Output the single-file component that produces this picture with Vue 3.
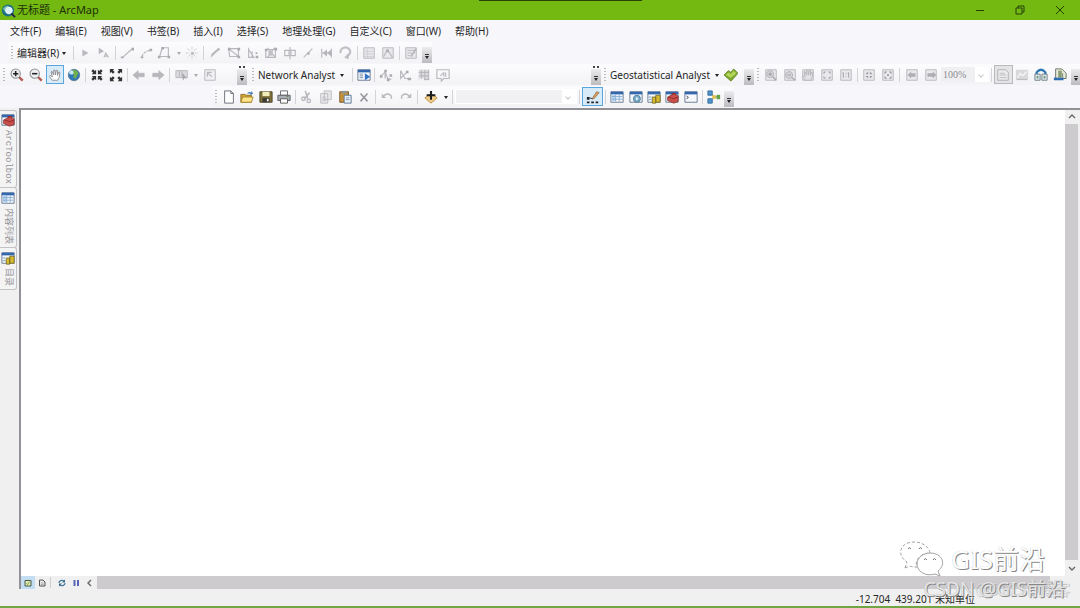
<script setup>
const menus = ['文件(F)', '编辑(E)', '视图(V)', '书签(B)', '插入(I)', '选择(S)', '地理处理(G)', '自定义(C)', '窗口(W)', '帮助(H)']

const page = '<path d="M2 2h12v12H2z" fill="#e9e9ec" stroke="#b4b4b9"/>'
const win = '<path d="M1 2h14v12H1z" fill="#f4f8fc" stroke="#61748c"/><path d="M1 2h14v3H1z" fill="#3468ae"/>'
const g = 'fill="none" stroke="#b8b8bd" stroke-width="1.3"'
const lens = '<path d="M10 10l4.500 4.500" stroke="#b05a50" stroke-width="2.800"/><circle cx="6.500" cy="6.500" r="5.300" fill="#eef0f2" stroke="#8a8d92" stroke-width="1.200"/>'
const inward = '<path d="M2 7h5V2L5.500 3.500 3.500 1.500l-2 2 2 2zM14 7H9V2l1.500 1.500 2-2 2 2-2 2zM2 9h5v5l-1.500-1.500-2 2-2-2 2-2zM14 9H9v5l1.500-1.500 2 2 2-2-2-2z" fill="#333"/>'
const outward = '<path d="M1 1h5L4.500 2.500l2 2-2 2-2-2L1 6zM15 1h-5l1.500 1.500-2 2 2 2 2-2L15 6zM1 15h5l-1.500-1.500 2-2-2-2-2 2L1 10zM15 15h-5l1.500-1.500-2-2 2-2 2 2L15 10z" fill="#333"/>'
const hand = 'M5 14L1.500 9.500l1-1L5 10 3.500 4.500l1-.8L6.500 8V2.500h1.500L8.500 8l1-5.500 1.400.3L10.800 8.500l1.700-4 1.200.5-1 6L11 14z'

const icons = {
  play: '<path d="M5 4l7 4-7 4z" fill="#b9b9be"/>',
  playA: '<path d="M2 2l6 4-6 3z" fill="#b5b5ba"/><path d="M8 13l2-5 3 5M9 11.500h3" ' + g + '/>',
  line: `<path d="M3 13L13 4" ${g}/><path d="M1 12h3v2H1zM13 2h3v3h-3z" fill="#aaaab0"/>`,
  curve: `<path d="M3 13q2-7 10-8" ${g} stroke-dasharray="4 1"/><path d="M2 12h3v2H2zM12 3h3v3h-3z" fill="#aaaab0"/>`,
  poly: `<path d="M2 12h11V2H6L3 12" ${g}/><path d="M1 11h3v3H1zM12 11h3v3h-3zM5 1h3v3H5z" fill="#aaaab0"/>`,
  burst: '<path d="M8 1v4M8 11v4M1 8h4M11 8h4M3 3l3 3M10 10l3 3M13 3l-3 3M6 10l-3 3" stroke="#c2c2c7" stroke-dasharray="2 1"/><path d="M7 7h3v3H7z" fill="#b5b5ba"/>',
  pencil: '<path d="M3 13l1-4 8-7 2 2-8 7z" fill="#b5b5ba"/><path d="M4 13l8-8" stroke="#ededf0"/>',
  verts: `<path d="M2 3h11v9H3zM2 3l11 9" ${g}/><path d="M1 2h3v3H1zM12 11h3v3h-3zM12 2h3v3h-3z" fill="#aaaab0"/>`,
  tri: `<path d="M3 2v11h6L3 4M7 6v7" ${g}/><path d="M11 7h2v2h-2zM11 11h3v3h-3z" fill="#aaaab0"/>`,
  cut: `<path d="M2 4h11v9H2zM4 2l9 11M12 2L4 13" ${g}/><path d="M5 5h5v6H5z" fill="#c0c0c5"/><path d="M1 3h3v3H1zM12 2h3v3h-3z" fill="#aaaab0"/>`,
  split: `<path d="M2 5h12v6H2zM8 1v14" ${g}/><path d="M6 6h4v4H6z" fill="#c6c6ca"/>`,
  slash: `<path d="M3 13L13 3" ${g}/><path d="M7 7h3v3H7z" fill="#b5b5ba"/>`,
  merge: `<path d="M2 3v10M13 3v10M3 8h10" ${g}/><path d="M3 8l5-4v8zM13 4v8L8 8z" fill="#b5b5ba"/>`,
  rotate: '<path d="M2 8a5.500 5 0 1 1 8 3" fill="none" stroke="#c2c2c6" stroke-width="2.600"/><path d="M11 8v7l-5-2z" fill="#bcbcc0"/>',
  table: page + '<path d="M3 6h10M3 9h10M3 12h10M6 3v11" stroke="#cdcdd2"/>',
  sketch: page + `<path d="M3 12l4-7 3 3 3 5" ${g}/><path d="M6 4h3v3H6z" fill="#aaaab0"/>`,
  form: page + '<path d="M4 5h8M4 8h5M4 11h3" stroke="#b4b4b9"/><path d="M8 12l6-9" stroke="#b4b4b9" stroke-width="2"/>',
  zoomIn: lens + '<path d="M3.500 6.500h6M6.500 3.500v6" stroke="#222" stroke-width="1.800"/>',
  zoomOut: lens + '<path d="M3.500 6.500h6" stroke="#222" stroke-width="1.800"/>',
  pan: `<path d="${hand}" fill="#fff" stroke="#88888c"/>`,
  globe: '<circle cx="8" cy="8" r="6.500" fill="#2e77b8" stroke="#5d7d93"/><path d="M7 2q5 0 6 4l-3 6-3-1 1-3-3-2z" fill="#6fae4c"/><circle cx="5" cy="5" r="2.500" fill="#c9e6f7"/>',
  inward,
  outward,
  back: '<path d="M1 8l6-5v3h7v4H7v3z" fill="#b8b8bc" stroke="#adadb2" stroke-width=".6"/>',
  fwd: '<path d="M15 8L9 3v3H2v4h7v3z" fill="#b8b8bc" stroke="#adadb2" stroke-width=".6"/>',
  select: '<path d="M1 3h13v8H1z" fill="#dcdce0" stroke="#b4b4b9"/><path d="M5 3v8M8 3v8" stroke="#b4b4b9"/><path d="M8 5l6 7-3-.5-2 3z" fill="#a8a8ae"/>',
  clear: '<path d="M2 2h12v12H2z" fill="#f0f0f3" stroke="#b4b4b9"/>' + `<path d="M5 5l5 5M5 10V5h5" ${g}/>`,
  netWin: win + '<path d="M3 7h4M3 9h4M3 11h4" stroke="#79889a"/><path d="M9 6l6 4-6 4z" fill="#2f72c8"/>',
  net1: `<path d="M2 9l5-4 3 7 4 1M7 5v7" ${g}/><path d="M6 2h3v3H6zM1 8h3v3H1zM12 7h3v3h-3zM9 12h3v3H9z" fill="#aaaab0"/>`,
  net2: `<path d="M3 3v9l7-7M3 3l5 9h5" ${g}/><path d="M9 3h3v3H9zM11 11h4v3h-4z" fill="#aaaab0"/>`,
  netGrid: '<path d="M2 2h12v12H2z" fill="#dcdce0"/><path d="M2 5h12M2 9h12M2 13h12M5 2v12M9 2v12M13 2v12" stroke="#b0b0b5"/><path d="M2 12h6v3H2z" fill="#f2f2f4"/>',
  netInfo: `<path d="M1 2h14v10H9l-3 3v-3H1z" ${g}/><path d="M5 9l4-4M9 5v5M11 5v5" ${g}/>`,
  gem: '<path d="M0 8l5-5 3 2 3-4 5 5-8 9z" fill="#7daa2e" stroke="#67852e"/><path d="M2 8l3-3 3 2 3-4 3 3-6 5z" fill="#b5d558"/>',
  pZoomIn: page + '<circle cx="7" cy="7" r="4" fill="#d4d4d8" stroke="#b0b0b5"/><path d="M5 7h4M7 5v4M10 10l4 4" stroke="#a4a4a9" stroke-width="1.400"/>',
  pZoomOut: page + '<circle cx="7" cy="8" r="4" fill="#d4d4d8" stroke="#b0b0b5"/><path d="M5 8h4M10 11l4 3" stroke="#a4a4a9" stroke-width="1.400"/>',
  pHand: page + `<path d="${hand}" fill="#e2e2e5" stroke="#b4b4b9"/>`,
  pFull: page + '<path d="M4 4h3L4 7zM9 4h3v3zM4 9l3 3H4zM12 9v3H9z" fill="#a2a2a7"/>',
  pOne: page + '<path d="M5 5v6M11 5v6M4 6l1-1M10 6l1-1M8 6v1M8 9v1" stroke="#a8a8ad" stroke-width="1.200"/>',
  pIn: page + '<path d="M4 7h3V4zM9 4v3h3zM4 9h3v3zM9 9h3l-3 3z" fill="#96969b"/>',
  pOut: page + '<path d="M4 4h3L4 7zM9 4h3v3zM4 9l3 3H4zM12 9v3H9zM7 7h2v2H7z" fill="#96969b"/>',
  pBack: page + '<path d="M3 8l4-4v2h5v4H7v2z" fill="#adadb2"/>',
  pFwd: page + '<path d="M14 8l-4-4v2H4v4h6v2z" fill="#adadb2"/>',
  draft: '<path d="M2 2h9l3 3v9H2z" fill="#ececee" stroke="#aaaaae"/><path d="M4 6h6M4 8h8M4 11h8" stroke="#b9b9bd"/>',
  chart: '<path d="M1 2h14v12H1z" fill="#d9d9dc"/><path d="M3 11l3-5 3 3 4-5" fill="none" stroke="#f6f6f8" stroke-width="1.500"/><path d="M2 13h12" stroke="#b4b4b9"/>',
  swap: '<path d="M3 7V5q5-6 10 0v2" fill="none" stroke="#2d77b5" stroke-width="2.600"/><path d="M1 7h6v7H1zM9 7h6v7H9z" fill="#dfe6e8" stroke="#6d7b80"/><path d="M3 9h2v3H3zM11 9h2v3h-2z" fill="#6d9a88"/>',
  ddp: '<path d="M3 1h7l5 5v6H3z" fill="#e8ead9" stroke="#5e6a5a"/><path d="M6 3h4v8H6z" fill="#8a9a72"/><path d="M11 6v5" stroke="#6d7a68"/><path d="M1 11h11v3H1z" fill="#2e6db2"/>',
  newDoc: '<path d="M3 1h7l3 3v11H3z" fill="#fff" stroke="#62666f"/><path d="M10 1v3h3" fill="none" stroke="#62666f"/>',
  open: '<path d="M1 5h5l1 1h6v8H1z" fill="#d2a338" stroke="#8a6a1c"/><path d="M3 8h12l-2 6H1z" fill="#ffe58a" stroke="#a5842c"/><path d="M8 4q2-3 5-1V1l2 3-3 2V4" fill="#3474ba"/>',
  save: '<path d="M1 2h14v12H1z" fill="#7d7038" stroke="#4a4428"/><path d="M4 2h8v5H4z" fill="#f2eebc"/><path d="M4 9h8v5H4z" fill="#3b3b33"/><path d="M9 10h2v3H9z" fill="#eee"/>',
  print: '<path d="M4 1h8v5H4z" fill="#fff" stroke="#60646a"/><path d="M1 6h14v6H1z" fill="#aab0b5" stroke="#53575d"/><path d="M4 10h8v5H4z" fill="#fafafa" stroke="#555"/><path d="M11 7.500h2" stroke="#4d7a3c"/>',
  scissors: '<path d="M6 1l3 9M11 3L5 10" fill="none" stroke="#b8b8bd" stroke-width="1.800"/><circle cx="4" cy="10" r="2" fill="none" stroke="#b8b8bd" stroke-width="1.500"/><circle cx="10" cy="12.500" r="2" fill="none" stroke="#b8b8bd" stroke-width="1.500"/>',
  copy: '<path d="M6 1h8v10H6zM2 4h8v11H2z" fill="#e8e8eb" stroke="#b9b9be"/><path d="M4 8h4M4 10h4M4 12h4" stroke="#c0c0c5"/>',
  paste: '<path d="M2 2h10v12H2z" fill="#c6923c" stroke="#765422"/><path d="M4 1h6v3H4z" fill="#8f9297"/><path d="M7 6h8v9H7z" fill="#e8f0f8" stroke="#56728f"/><path d="M9 9h4M9 11h4" stroke="#7b97b3"/>',
  remove: '<path d="M4 4l8 9M12 4l-8 9" stroke="#98989d" stroke-width="1.800"/>',
  undo: '<path d="M4 7q5-5 9 0v3" fill="none" stroke="#b8b8bd" stroke-width="1.600"/><path d="M2 4v5h5z" fill="#b8b8bd"/>',
  redo: '<path d="M12 7q-5-5-9 0v3" fill="none" stroke="#b8b8bd" stroke-width="1.600"/><path d="M14 4v5H9z" fill="#b8b8bd"/>',
  addData: '<path d="M8 4l7 5-7 6-7-6z" fill="#f2cf8c" stroke="#b98a34"/><path d="M8 1v10M3 6h10" stroke="#1d1d1d" stroke-width="2.400"/>',
  editorBar: '<path d="M1 8h3v3H1zM1 13h3v2H1zM6 13h3v2H6zM11 13h3v2h-3z" fill="#222"/><path d="M4 9l4 1" stroke="#222"/><path d="M7 10l5-8 3 1-6 7z" fill="#e0a060" stroke="#7d5530" stroke-width=".7"/>',
  toc: win + '<path d="M2 5h4v8H2z" fill="#b7d5f0"/><path d="M2 7.500h12M2 10.500h12M6.500 5v8M10.500 5v8" stroke="#83a9cf"/>',
  catalogWin: win + '<circle cx="9" cy="10" r="4" fill="#7aaecf" stroke="#4b7793"/><path d="M8 8l3 2-3 2z" fill="#e9f3f0"/>',
  catalog: win + '<path d="M6 8h4v7H6zM10 6h5v8h-5z" fill="#dabb30" stroke="#77702a"/><path d="M2 8h3M2 11h3" stroke="#7694b0"/>',
  toolbox: win + '<path d="M3 8l8-4 4 3v6l-5 2-7-3z" fill="#c9504a" stroke="#8e3f3b"/><path d="M4 8l6 2 5-2M8 6V4h4v2" fill="none" stroke="#8d2824"/>',
  python: win + '<path d="M3 7l2 1.500L3 10" fill="none" stroke="#333"/>',
  model: '<path d="M4 4l5 4-5 4M8 8h5" fill="none" stroke="#555"/><path d="M1 1h5v5H1zM1 10h5v5H1z" fill="#4d94cf" stroke="#386d99"/><path d="M6 6h4v4H6z" fill="#e4c34a"/><path d="M11 5.500h4v5h-4z" fill="#67a347"/>',
  data: '<path d="M2 3h12v11H2z" fill="#dfe9a8" stroke="#4b5a50" stroke-width="2"/><path d="M5 9l2 2 4-5" fill="none" stroke="#77a35e" stroke-width="2"/>',
  layout: '<path d="M3 2h7l4 4v8H3z" fill="#e6e6e6" stroke="#555" stroke-width="2"/><path d="M6 8h5M6 11h5" stroke="#777"/>',
  refresh: '<path d="M2 8a6 5 0 0 1 10-4M14 8a6 5 0 0 1-10 4" fill="none" stroke="#44799c" stroke-width="2.400"/><path d="M14 1v6H8zM2 15V9h6z" fill="#35688c"/>',
  pause: '<path d="M3 2h4v12H3zM10 2h4v12h-4z" fill="#5666b5"/>'
}

const i = (name, on) => ({ t: 'icon', name, on })
const arrow = (dim) => ({ t: 'arrow', dim })
const label = (text) => ({ t: 'label', text })
const set = (...names) => names.map((n) => i(n))

const rows = [
  [
    { cls: 'editor', groups: [
      { w: 58, items: [label('编辑器(R)'), arrow()] },
      { w: 42, items: set('play', 'playA') },
      { w: 88, items: [...set('line', 'curve', 'poly'), arrow(true), i('burst')] },
      { w: 154, items: set('pencil', 'verts', 'tri', 'cut', 'split', 'slash', 'merge', 'rotate') },
      { w: 42, items: set('table', 'sketch') },
      { w: 23, items: set('form') }
    ] }
  ],
  [
    { cls: 'tools', dots: true, groups: [
      { w: 78, items: [i('zoomIn'), i('zoomOut'), i('pan', true), i('globe')] },
      { w: 42, items: set('inward', 'outward') },
      { w: 42, items: set('back', 'fwd') },
      { w: 52, items: [i('select'), arrow(true), i('clear')] }
    ] },
    { cls: 'network', dots: true, groups: [
      { w: 96, items: [label('Network Analyst'), arrow()] },
      { w: 22, items: set('netWin') },
      { w: 80, items: set('net1', 'net2', 'netGrid', 'netInfo') }
    ] },
    { cls: 'geo', groups: [
      { w: 135, items: [label('Geostatistical Analyst'), arrow(), i('gem')] }
    ] },
    { cls: 'layout', groups: [
      { w: 96, items: set('pZoomIn', 'pZoomOut', 'pHand', 'pFull', 'pOne') },
      { w: 42, items: set('pIn', 'pOut') },
      { w: 92, items: [...set('pBack', 'pFwd'), { t: 'zoom' }] },
      { w: 80, items: [i('draft', 'dim'), i('chart'), i('swap'), i('ddp')] }
    ] }
  ],
  [
    { cls: 'standard', groups: [
      { w: 76, items: set('newDoc', 'open', 'save', 'print') },
      { w: 80, items: set('scissors', 'copy', 'paste', 'remove') },
      { w: 42, items: set('undo', 'redo') },
      { w: 35, items: [i('addData'), arrow()] },
      { w: 127, items: [{ t: 'scale' }] },
      { w: 26, items: [i('editorBar', true)] },
      { w: 97, items: set('toc', 'catalogWin', 'catalog', 'toolbox', 'python') },
      { w: 22, items: set('model') }
    ] }
  ]
]

const tabs = [
  { icon: 'toolbox', text: 'ArcToolbox' },
  { icon: 'toc', text: '内容列表' },
  { icon: 'catalog', text: '目录' }
]
</script>

<template>
  <div class="app">
    <header class="title">
      <svg class="logo" viewBox="0 0 16 16"><circle cx="7.500" cy="8" r="6.500" fill="#1d6f86" /><path d="M2 6q3-4 6-3l1 4-4 3z" fill="#7cc3b2" /><circle cx="8.500" cy="8" r="3.500" fill="#d9f1fa" stroke="#f3fbff" /><path d="M11 11l4 4" stroke="#224" stroke-width="2" /></svg>
      <h1>无标题 - ArcMap</h1>
      <span class="notch"></span>
      <div class="controls">
        <button aria-label="最小化"><svg viewBox="0 0 10 10"><path d="M1 5.500h8" /></svg></button>
        <button aria-label="还原"><svg viewBox="0 0 10 10"><path d="M1 3h6v6H1zM3 3V1h6v6H7" /></svg></button>
        <button aria-label="关闭"><svg viewBox="0 0 10 10"><path d="M1 1l8 8M9 1l-8 8" /></svg></button>
      </div>
    </header>

    <nav class="menu">
      <button v-for="m in menus" :key="m">{{ m }}</button>
    </nav>

    <div class="bars">
      <div v-for="(row, r) in rows" :key="r" class="row">
        <div v-for="bar in row" :key="bar.cls" class="bar" :class="bar.cls" role="toolbar" :aria-label="bar.cls">
          <span class="grip"></span>
          <div v-for="(grp, k) in bar.groups" :key="k" class="group" :style="{ width: grp.w + 'px' }">
            <template v-for="(it, n) in grp.items" :key="n">
              <button v-if="it.t === 'icon'" class="tool" :class="{ on: it.on === true, dim: it.on === 'dim' }" :aria-label="it.name">
                <svg viewBox="0 0 16 16" v-html="icons[it.name]"></svg>
              </button>
              <button v-else-if="it.t === 'label'" class="label">{{ it.text }}</button>
              <span v-else-if="it.t === 'arrow'" class="arrow" :class="{ faded: it.dim }"></span>
              <label v-else-if="it.t === 'zoom'" class="combo"><select aria-label="缩放"><option>100%</option></select></label>
              <label v-else class="combo scale"><select aria-label="比例尺"><option></option></select></label>
            </template>
          </div>
          <button class="more" :class="{ dots: bar.dots }" aria-label="更多"><span class="arrow"></span></button>
        </div>
      </div>
    </div>

    <main class="work">
      <aside class="side">
        <button v-for="t in tabs" :key="t.text" class="tab">
          <svg viewBox="0 0 16 16" v-html="icons[t.icon]"></svg>
          <span>{{ t.text }}</span>
        </button>
      </aside>
      <section class="view">
        <div class="upper">
          <div class="map"></div>
          <div class="vbar">
            <button aria-label="上"><svg viewBox="0 0 8 8"><path d="M1 5l3-3 3 3" /></svg></button>
            <span class="thumb"></span>
            <button aria-label="下"><svg viewBox="0 0 8 8"><path d="M1 3l3 3 3-3" /></svg></button>
          </div>
        </div>
        <div class="hbar">
          <button class="mini on" aria-label="数据视图"><svg viewBox="0 0 16 16" v-html="icons.data"></svg></button>
          <button class="mini" aria-label="布局视图"><svg viewBox="0 0 16 16" v-html="icons.layout"></svg></button>
          <span class="split"></span>
          <button class="mini" aria-label="刷新"><svg viewBox="0 0 16 16" v-html="icons.refresh"></svg></button>
          <button class="mini" aria-label="暂停"><svg viewBox="0 0 16 16" v-html="icons.pause"></svg></button>
          <button class="mini" aria-label="左"><svg class="chev" viewBox="0 0 8 8"><path d="M5 1L2 4l3 3" /></svg></button>
          <span class="thumb"></span>
        </div>
      </section>
    </main>

    <footer class="status"><span>-12.704&nbsp; 439.201 未知单位</span></footer>

    <div class="mark">
      <svg viewBox="0 0 46 38">
        <g fill="#fff" stroke="#a2a2a2">
          <path d="M6 28l2-6C-3 15 1 2 15 2c9 0 15 5 16 11-10 0-16 8-13 14-3 0-5 0-7-1z" stroke-dasharray="3 2" />
          <path d="M41 36l-5-2c-10 3-18-3-18-10 0-6 6-11 13-11 12 0 17 11 8 18z" />
        </g>
        <g fill="none" stroke="#777"><path d="M9 9q1-3 3 0M20 9q1-3 3 0M25 20q1-3 3 0M34 20q1-3 3 0" /></g>
      </svg>
      <span>GIS前沿</span>
    </div>
    <div class="credit ghost">@51CTO博客</div>
    <div class="credit">CSDN @GIS前沿</div>
  </div>
</template>

<style>
html, body, #app { height: 100%; margin: 0; }
</style>

<style scoped>
.app {
  position: relative;
  display: flex;
  flex-direction: column;
  height: 100%;
  overflow: hidden;
  background: #f0f0f0;
  color: #262626;
  font: 10px/14px "Noto Sans", "Noto Sans CJK SC", sans-serif;
}
button {
  margin: 0;
  padding: 0;
  border: 0;
  background: none;
  color: inherit;
  font: inherit;
}
svg { display: block; }

.title {
  position: relative;
  display: flex;
  align-items: center;
  height: 20px;
  flex: none;
  padding-left: 1px;
  background: #74b812;
  color: #1d3009;
}
.logo { width: 15px; height: 15px; }
.title h1 { margin: 0 auto 0 1px; font-size: 11px; font-weight: 400; }
.notch {
  position: absolute;
  top: 0;
  left: 479px;
  width: 163px;
  height: 1px;
  background: #2a4307;
}
.controls { display: flex; }
.controls button { display: grid; place-items: center; width: 40px; height: 19px; }
.controls svg { width: 10px; height: 10px; fill: none; stroke: #24400a; }

.menu {
  display: flex;
  gap: 14px;
  height: 22px;
  flex: none;
  padding-left: 10px;
  background: #f7f7fb;
  white-space: nowrap;
}

.bars { flex: none; background: #f7f7fb; }
.row { display: flex; height: 22px; }
.bar {
  display: flex;
  align-items: center;
  height: 21px;
  background: linear-gradient(#fcfcfe, #f3f3f6);
}
.editor { margin-left: 8px; }
.tools { width: 247px; }
.network { flex: 1; }
.geo { width: 153px; }
.layout { width: 326px; }
.standard { margin-left: 212px; }
.grip {
  flex: none;
  width: 2px;
  height: 13px;
  margin: 0 2px 0 3px;
  background: repeating-linear-gradient(#b9b9be 0 1px, transparent 1px 3px);
}
.network .grip { margin-left: 5px; }
.group {
  display: flex;
  align-items: center;
  box-sizing: border-box;
  flex: none;
  height: 20px;
  padding: 0 2px 0 1px;
}
.group + .group { padding-left: 3px; background: linear-gradient(#d4d4d8, #d4d4d8) 0 50% / 1px 14px no-repeat; }
.tool {
  display: grid;
  place-items: center;
  flex: 1 1 0;
  box-sizing: border-box;
  min-width: 18px;
  height: 19px;
  border: 1px solid transparent;
}
.tool svg { width: 14px; height: 14px; }
.tool.on { border-color: #5aa7de; background: #d8ebf9; }
.tool.dim { border-color: #b9b9bd; background: #e4e4e7; }
.label { padding-left: 1px; white-space: nowrap; }
.arrow {
  flex: none;
  width: 0;
  margin: 1px 2px 0 3px;
  border: 2px solid transparent;
  border-top: 3px solid #222;
  border-bottom: 0;
}
.arrow.faded { border-top-color: #aaaaaf; }
.geo .arrow, .network .arrow { margin-left: 5px; }
.more {
  position: relative;
  flex: none;
  align-self: flex-end;
  display: flex;
  align-items: flex-end;
  justify-content: center;
  width: 10px;
  height: 16px;
  margin-left: auto;
  padding-bottom: 4px;
  box-sizing: border-box;
  background: linear-gradient(#ececef, #bcbcc0);
}
.bar .more .arrow { margin: 0; }
.more::after {
  content: "";
  position: absolute;
  left: 3px;
  bottom: 8px;
  width: 4px;
  height: 1px;
  background: #333;
}
.dots::before {
  content: "";
  position: absolute;
  left: 2px;
  top: -3px;
  width: 6px;
  height: 2px;
  background: linear-gradient(90deg, #444 2px, transparent 2px 4px, #444 4px);
}
.editor .more, .standard .more { margin-left: 0; }
.combo {
  display: flex;
  align-items: center;
  flex: none;
  width: 48px;
  box-sizing: border-box;
  height: 15px;
  padding-right: 6px;
  background: linear-gradient(90deg, #f0f0f3 70%, #fff 70%);
}
.combo::after {
  content: "";
  width: 3px;
  height: 3px;
  border: solid #c6c6ca;
  border-width: 0 1px 1px 0;
  transform: rotate(45deg);
}
.combo select {
  flex: 1;
  min-width: 0;
  height: 13px;
  padding: 0 0 0 2px;
  border: 0;
  appearance: none;
  background: none;
  color: #8c8c91;
  font: 10px/13px "Liberation Serif", serif;
}
.scale { flex: 1; background: linear-gradient(90deg, #f1f1f4 88%, #fff 88%); border: 1px solid #fff; }

.work {
  display: flex;
  flex: 1;
  min-height: 0;
}
.side { width: 19px; flex: none; padding-top: 2px; box-sizing: border-box; }
.tab {
  display: flex;
  flex-direction: column;
  align-items: center;
  gap: 3px;
  width: 17px;
  padding: 2px 0 3px;
  border: 1px solid #c3c3c7;
  border-left: 0;
  border-radius: 0 3px 3px 0;
  box-sizing: border-box;
  background: #f4f4f5;
  color: #929296;
}
.tab + .tab { margin-top: -1px; padding-top: 3px; }
.tab svg { width: 14px; height: 14px; }
.tab span {
  writing-mode: vertical-rl;
  text-orientation: sideways;
  font: 9px/12px "Liberation Mono", "Noto Sans CJK SC", monospace;
}
.view {
  display: flex;
  flex-direction: column;
  flex: 1;
  min-width: 0;
  border-top: 2px solid #929296;
  border-left: 2px solid #929296;
}
.upper { display: flex; flex: 1; min-height: 0; }
.map { flex: 1; background: #fff; }
.vbar {
  display: flex;
  flex-direction: column;
  width: 13px;
  margin-right: 2px;
}
.vbar button { display: grid; place-items: center; height: 14px; }
.vbar button:last-child { height: 16px; }
.vbar svg, .chev { width: 8px; height: 8px; fill: none; stroke: #66666b; stroke-width: 1.4; }
.thumb { flex: 1; background: #cdcbcd; }
.hbar {
  display: flex;
  align-items: stretch;
  height: 13px;
  flex: none;
  padding-right: 30px;
}
.mini { display: grid; place-items: center; width: 14px; }
.mini svg { width: 8px; height: 8px; }
.mini.on { background: #c3def2; }
.split { width: 1px; margin: 1px 4px 1px 1px; background: #cfcfd3; }

.status {
  display: flex;
  justify-content: flex-end;
  align-items: flex-end;
  height: 19px;
  flex: none;
  box-sizing: border-box;
  padding-right: 105px;
  border-bottom: 2px solid #6fa545;
}

.mark, .credit {
  position: absolute;
  color: #fff;
  text-shadow: 1px 1px 0 #888, 0 0 1px #bbb;
  white-space: nowrap;
}
.mark {
  right: 35px;
  bottom: 30px;
  display: flex;
  align-items: center;
  gap: 6px;
  font-size: 26px;
  line-height: 38px;
}
.mark svg { width: 46px; height: 38px; }
.credit { right: 15px; bottom: 7px; font-size: 19px; line-height: 24px; color: #e4e4e4; }
.ghost { right: 10px; font-size: 16px; opacity: .4; }
</style>
